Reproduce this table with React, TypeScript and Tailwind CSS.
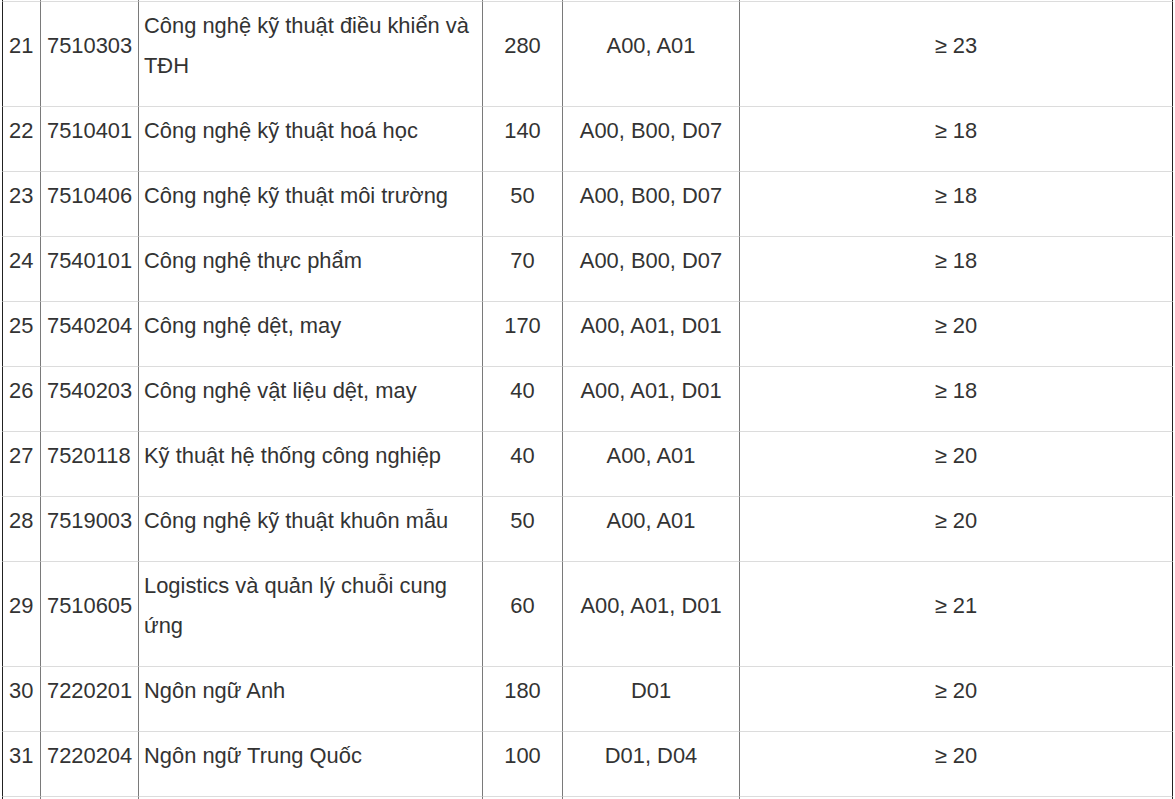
const rows: [string, string, string, string, string, string][] = [
  ['21', '7510303', 'Công nghệ kỹ thuật điều khiển và TĐH', '280', 'A00, A01', '≥ 23'],
  ['22', '7510401', 'Công nghệ kỹ thuật hoá học', '140', 'A00, B00, D07', '≥ 18'],
  ['23', '7510406', 'Công nghệ kỹ thuật môi trường', '50', 'A00, B00, D07', '≥ 18'],
  ['24', '7540101', 'Công nghệ thực phẩm', '70', 'A00, B00, D07', '≥ 18'],
  ['25', '7540204', 'Công nghệ dệt, may', '170', 'A00, A01, D01', '≥ 20'],
  ['26', '7540203', 'Công nghệ vật liệu dệt, may', '40', 'A00, A01, D01', '≥ 18'],
  ['27', '7520118', 'Kỹ thuật hệ thống công nghiệp', '40', 'A00, A01', '≥ 20'],
  ['28', '7519003', 'Công nghệ kỹ thuật khuôn mẫu', '50', 'A00, A01', '≥ 20'],
  ['29', '7510605', 'Logistics và quản lý chuỗi cung ứng', '60', 'A00, A01, D01', '≥ 21'],
  ['30', '7220201', 'Ngôn ngữ Anh', '180', 'D01', '≥ 20'],
  ['31', '7220204', 'Ngôn ngữ Trung Quốc', '100', 'D01, D04', '≥ 20'],
];

// cell classes per column (right border gray, outer ones dark)
const cellCls = [
  'border-l border-l-[#222] border-r border-r-[#7a7a7a] pl-[6px] pr-[2px]',
  'border-r border-r-[#7a7a7a] pl-[6px] pr-[1px]',
  'border-r border-r-[#7a7a7a] pl-[5px] pr-[6px]',
  'border-r border-r-[#7a7a7a] justify-center text-center',
  'border-r border-r-[#7a7a7a] justify-center text-center',
  'border-r border-r-[#222] justify-center text-center',
];

export default function App() {
  return (
    <div
      className="bg-white min-h-screen pl-[2px] text-[#333] text-[21.9px] leading-[40px]"
      style={{ fontFamily: '"Liberation Sans", Arial, sans-serif' }}
    >
      <div className="grid grid-cols-[39px_98px_344px_80px_177px_433px]">
        {/* stub of the previous row */}
        {cellCls.map((c, i) => (
          <div key={'s' + i} className={`${c} h-[2px] border-b border-b-[#dcdcdc]`} />
        ))}
        {rows.map((r) =>
          r.map((v, i) => (
            <div
              key={r[0] + '-' + i}
              className={`${cellCls[i]} flex items-center border-b border-b-[#dcdcdc] pt-[4px] pb-[20px]`}
            >
              <span>{v}</span>
            </div>
          ))
        )}
        {cellCls.map((c, i) => (
          <div key={'e' + i} className={`${c} h-[40px]`} />
        ))}
      </div>
    </div>
  );
}
